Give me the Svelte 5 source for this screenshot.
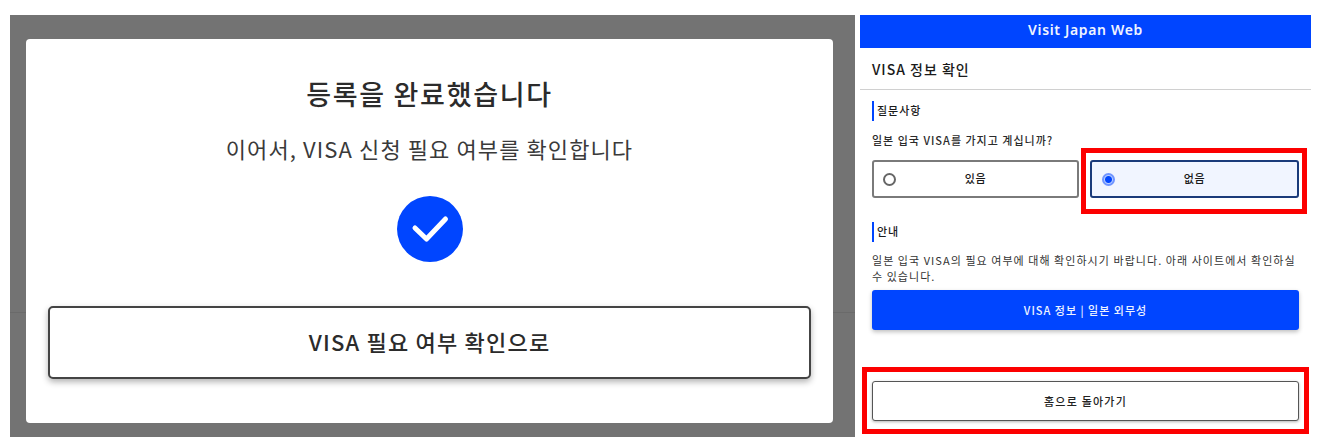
<script lang="ts">
	const options = [
		{ label: '있음', selected: false },
		{ label: '없음', selected: true }
	];
</script>

<div class="page">
	<section class="overlay">
		<div class="rule"></div>
		<div class="modal">
			<h1>등록을 완료했습니다</h1>
			<p>이어서, VISA 신청 필요 여부를 확인합니다</p>
			<svg class="check" viewBox="0 0 66 66" width="66" height="66" aria-hidden="true">
				<circle cx="33" cy="33" r="33" fill="#0045ff" />
				<path d="M18 32 L29.5 43 L48.5 23" fill="none" stroke="#fff" stroke-width="5" stroke-linecap="round" stroke-linejoin="round" />
			</svg>
			<button class="next">VISA 필요 여부 확인으로</button>
		</div>
	</section>

	<section class="phone">
		<header>Visit Japan Web</header>
		<div class="title">VISA 정보 확인</div>
		<div class="body">
			<h2 class="first">질문사항</h2>
			<div class="question">일본 입국 VISA를 가지고 계십니까?</div>
			<div class="options">
				{#each options as opt}
					<div class="option" class:selected={opt.selected}>
						<span class="radio"></span>
						<span class="label">{opt.label}</span>
						{#if opt.selected}<span class="mark mark-option"></span>{/if}
					</div>
				{/each}
			</div>
			<h2>안내</h2>
			<div class="notice">일본 입국 VISA의 필요 여부에 대해 확인하시기 바랍니다. 아래 사이트에서 확인하실 수 있습니다.</div>
			<button class="link">VISA 정보 | 일본 외무성</button>
			<div class="home-wrap">
				<button class="home">홈으로 돌아가기</button>
				<span class="mark mark-home"></span>
			</div>
		</div>
	</section>
</div>

<style>
	:global(body) {
		margin: 0;
		background: #fff;
	}
	.page {
		display: flex;
		gap: 5px;
		width: 1320px;
		height: 443px;
		padding: 15px 0 0 10px;
		box-sizing: border-box;
		font-family: 'Noto Sans CJK KR', 'Noto Sans', sans-serif;
		overflow: hidden;
	}
	button {
		font-family: inherit;
		cursor: pointer;
	}
	.overlay {
		position: relative;
		width: 845px;
		height: 422px;
		background: #737373;
		padding: 24px 22px 14px 16px;
		box-sizing: border-box;
	}
	.rule {
		position: absolute;
		left: 0;
		right: 0;
		top: 297px;
		height: 1px;
		background: #6a6a6a;
	}
	.modal {
		position: relative;
		height: 100%;
		background: #fff;
		border-radius: 4px;
		padding: 0 22px;
		display: flex;
		flex-direction: column;
		align-items: center;
		color: #2b2b2b;
	}
	h1 {
		margin: 36px 0 0;
		font-size: 27px;
		line-height: 38px;
		font-weight: 500;
		letter-spacing: 1.7px;
	}
	.modal p {
		margin: 19px 0 0;
		font-size: 22px;
		line-height: 32px;
		font-weight: 400;
		letter-spacing: 1.1px;
		color: #3a3a3a;
	}
	.check {
		margin-top: 32px;
		flex: none;
	}
	.next {
		margin-top: 44px;
		width: 100%;
		height: 73px;
		flex: none;
		padding: 0 0 4px;
		background: #fff;
		border: 2px solid #444;
		border-radius: 5px;
		box-shadow: 0 3px 6px rgba(0, 0, 0, 0.3);
		font-size: 22px;
		font-weight: 500;
		letter-spacing: 1.2px;
		color: #2b2b2b;
	}
	.phone {
		width: 451px;
		color: #1a1a1a;
	}
	header {
		height: 33px;
		background: #0045ff;
		color: #f0f4ff;
		font-family: 'Noto Sans', sans-serif;
		font-size: 14px;
		font-weight: 600;
		letter-spacing: 0.65px;
		line-height: 30px;
		text-align: center;
	}
	.title {
		height: 41px;
		line-height: 43px;
		padding-left: 12px;
		font-size: 14px;
		font-weight: 500;
		letter-spacing: 1px;
		border-bottom: 1px solid #d0d0d0;
	}
	.body {
		padding: 0 12px;
	}
	h2 {
		margin: 24px 0 0;
		height: 20px;
		line-height: 19px;
		border-left: 2px solid #0045ff;
		padding-left: 3px;
		font-size: 11px;
		font-weight: 500;
		letter-spacing: 1px;
	}
	h2.first {
		margin-top: 11px;
	}
	.question {
		margin-top: 11px;
		font-size: 11px;
		line-height: 16px;
		font-weight: 500;
		letter-spacing: 1px;
		color: #2b2b2b;
	}
	.options {
		display: grid;
		grid-template-columns: 207px 209px;
		gap: 11px;
		margin-top: 12px;
	}
	.option {
		position: relative;
		height: 38px;
		padding-bottom: 2px;
		box-sizing: border-box;
		border: 2px solid #7a7a7a;
		border-radius: 3px;
		display: flex;
		align-items: center;
		justify-content: center;
		font-size: 11px;
		font-weight: 500;
		letter-spacing: 0.6px;
	}
	.option.selected {
		background: #f1f5ff;
		border: 2px solid #1a3a7a;
	}
	.radio {
		position: absolute;
		left: 9px;
		top: 50%;
		width: 9px;
		height: 9px;
		margin-top: -6px;
		border: 2px solid #666;
		border-radius: 50%;
		box-sizing: content-box;
		background: #fff;
	}
	.selected .radio {
		left: 10px;
		border-color: #6f94ff;
		background: radial-gradient(circle, #0045ff 0 3px, #bcd0ff 4px);
	}
	.mark {
		position: absolute;
		border: 5px solid #fc0000;
		box-sizing: border-box;
		pointer-events: none;
	}
	.mark-option {
		left: -11px;
		right: -10px;
		top: -14px;
		bottom: -18px;
	}
	.notice {
		margin-top: 10px;
		font-size: 11px;
		line-height: 16px;
		letter-spacing: 1.05px;
		color: #333;
	}
	.link {
		display: block;
		margin-top: 6px;
		width: 100%;
		height: 40px;
		background: #0045ff;
		border: 0;
		border-radius: 3px;
		box-shadow: 0 2px 4px rgba(0, 0, 0, 0.25);
		color: #eef3ff;
		font-size: 11px;
		font-weight: 500;
		letter-spacing: 1px;
	}
	.home-wrap {
		position: relative;
		margin-top: 51px;
	}
	.home {
		display: block;
		width: 100%;
		height: 40px;
		background: #fff;
		border: 1px solid #555;
		border-radius: 3px;
		box-shadow: 0 1px 3px rgba(0, 0, 0, 0.3);
		font-size: 11px;
		font-weight: 500;
		letter-spacing: 1.2px;
		color: #222;
	}
	.mark-home {
		left: -10px;
		right: -10px;
		top: -14px;
		bottom: -13px;
	}
</style>
